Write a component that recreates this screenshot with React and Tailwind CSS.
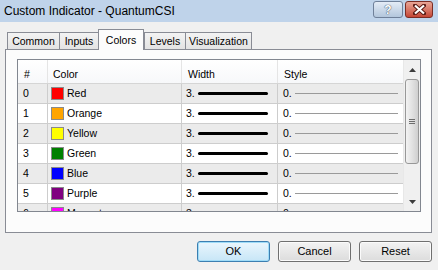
const rows = [
  { n: '0', name: 'Red', c: 'bg-[#ff0000]' },
  { n: '1', name: 'Orange', c: 'bg-[#ffa500]' },
  { n: '2', name: 'Yellow', c: 'bg-[#ffff00]' },
  { n: '3', name: 'Green', c: 'bg-[#008000]' },
  { n: '4', name: 'Blue', c: 'bg-[#0000ff]' },
  { n: '5', name: 'Purple', c: 'bg-[#800080]' },
  { n: '6', name: 'Magenta', c: 'bg-[#ff00ff]' },
];

const tabs = [
  { label: 'Common', w: 'w-[53px]' },
  { label: 'Inputs', w: 'w-[40px]' },
  { label: 'Colors', w: 'w-[46px]', active: true },
  { label: 'Levels', w: 'w-[42px]' },
  { label: 'Visualization', w: 'w-[67px]' },
];

function DialogButton({ children, primary }) {
  return (
    <button
      className={
        'w-[73px] h-[21px] rounded-[3px] border text-[11px] text-black flex items-center justify-center ' +
        (primary
          ? 'border-[#3c7fb1] bg-gradient-to-b from-[#eaf6fd] to-[#c7e6f7] shadow-[inset_0_0_0_1px_#9fdcf8]'
          : 'border-[#707070] bg-gradient-to-b from-[#f3f3f3] to-[#dcdcdc] shadow-[inset_0_0_0_1px_#fbfbfb]')
      }
    >
      {children}
    </button>
  );
}

export default function App() {
  return (
    <div className="w-[438px] h-[270px] bg-[#f0f0f0] overflow-hidden font-['Liberation_Sans',Arial,sans-serif] text-black">
      {/* title bar */}
      <div className="h-[22px] bg-[#bfd3ea] flex items-start">
        <div className="pl-[4px] pt-[4px] text-[12px] leading-[14px]">Custom Indicator - QuantumCSI</div>
        <div className="ml-auto flex gap-[2px] pt-[1px] pr-[5px]">
          <div className="w-[30px] h-[17px] rounded-[3px] border border-[#6f8099] bg-gradient-to-b from-[#e4ecf6] to-[#b3c6dc] flex items-center justify-center text-[12px] font-bold text-white [text-shadow:0_0_1px_#3a4a60,0_0_1px_#3a4a60]">
            ?
          </div>
          <div className="w-[28px] h-[17px] rounded-[3px] border border-[#7b2c24] bg-gradient-to-b from-[#e8a597] to-[#c44535] flex items-center justify-center">
            <svg width="13" height="11" viewBox="0 0 13 11">
              <path d="M2 1.5 L11 9.5 M11 1.5 L2 9.5" stroke="#5a1a14" strokeWidth="4" strokeLinecap="square" />
              <path d="M2 1.5 L11 9.5 M11 1.5 L2 9.5" stroke="#ffffff" strokeWidth="2.2" />
            </svg>
          </div>
        </div>
      </div>

      {/* tabs */}
      <div className="flex items-end pl-[7px] h-[21px] mt-[7px]">
        {tabs.map((t) =>
          t.active ? (
            <div
              key={t.label}
              className={t.w + ' relative z-10 h-[21px] bg-[#fcfcfc] border border-b-0 border-[#898c95] text-[10.5px] flex justify-center pt-[3px]'}
            >
              {t.label}
            </div>
          ) : (
            <div
              key={t.label}
              className={t.w + ' h-[17px] mb-[1px] border border-b-0 border-[#898c95] bg-gradient-to-b from-[#f3f3f3] to-[#e3e3e3] text-[10.5px] flex items-center justify-center pt-[1px] -mr-px'}
            >
              {t.label}
            </div>
          )
        )}
      </div>

      {/* tab panel */}
      <div className="ml-[5px] -mt-px w-[427px] h-[184px] border border-[#898c95] bg-[#fcfcfc] pt-[9px] pl-[11px]">
        <div className="w-[404px] h-[153px] border border-[#828790] bg-white flex overflow-hidden">
          <div className="w-[385px] text-[10.5px]">
            {/* header */}
            <div className="flex h-[24px] border-b border-[#d5d5d5] bg-gradient-to-b from-white to-[#f7f8fa]">
              <div className="w-[30px] border-r border-[#e5e5e5] pl-[6px] pt-[7px]">#</div>
              <div className="w-[134px] border-r border-[#e5e5e5] pl-[5px] pt-[7px]">Color</div>
              <div className="w-[96px] border-r border-[#e5e5e5] pl-[6px] pt-[7px]">Width</div>
              <div className="flex-1 pl-[6px] pt-[7px]">Style</div>
            </div>
            {rows.map((r, i) => (
              <div
                key={r.n}
                className={'flex h-[20px] border-b border-[#cdcdcd] ' + (i % 2 === 0 ? 'bg-[#ebebeb]' : 'bg-white')}
              >
                <div className="w-[30px] border-r border-[#cdcdcd] pl-[5px] flex items-center">{r.n}</div>
                <div className="w-[134px] border-r border-[#cdcdcd] pl-[3px] flex items-center">
                  <div className={r.c + ' w-[13px] h-[13px] border border-[#8a8a8a]'} />
                  <span className="ml-[3px]">{r.name}</span>
                </div>
                <div className="w-[96px] border-r border-[#cdcdcd] pl-[4px] flex items-center">
                  <span>3.</span>
                  <div className="ml-[3px] w-[70px] h-[3px] bg-black rounded-full" />
                </div>
                <div className="flex-1 pl-[5px] flex items-center">
                  <span>0.</span>
                  <div className="ml-[3px] w-[103px] h-px bg-[#9a9a9a]" />
                </div>
              </div>
            ))}
          </div>

          {/* scrollbar */}
          <div className="w-[17px] bg-[#f0f0f0] border-l border-[#e8e8e8] flex flex-col">
            <div className="h-[19px] flex items-center justify-center">
              <svg width="7" height="4" viewBox="0 0 7 4">
                <path d="M0 4 L3.5 0 L7 4 Z" fill="#3c3c3c" />
              </svg>
            </div>
            <div className="mx-px h-[85px] rounded-[3px] border border-[#989898] bg-gradient-to-r from-[#f3f3f3] via-[#e2e2e2] to-[#cfcfcf] flex flex-col items-center justify-center gap-px">
              <div className="w-[6px] h-px bg-[#6e6e6e]" />
              <div className="w-[6px] h-px bg-[#6e6e6e]" />
              <div className="w-[6px] h-px bg-[#6e6e6e]" />
            </div>
            <div className="flex-1" />
            <div className="h-[19px] flex items-center justify-center">
              <svg width="7" height="4" viewBox="0 0 7 4">
                <path d="M0 0 L3.5 4 L7 0 Z" fill="#3c3c3c" />
              </svg>
            </div>
          </div>
        </div>
      </div>

      {/* buttons */}
      <div className="flex justify-end gap-[8px] pr-[6px] mt-[8px]">
        <DialogButton primary>OK</DialogButton>
        <DialogButton>Cancel</DialogButton>
        <DialogButton>Reset</DialogButton>
      </div>
    </div>
  );
}
